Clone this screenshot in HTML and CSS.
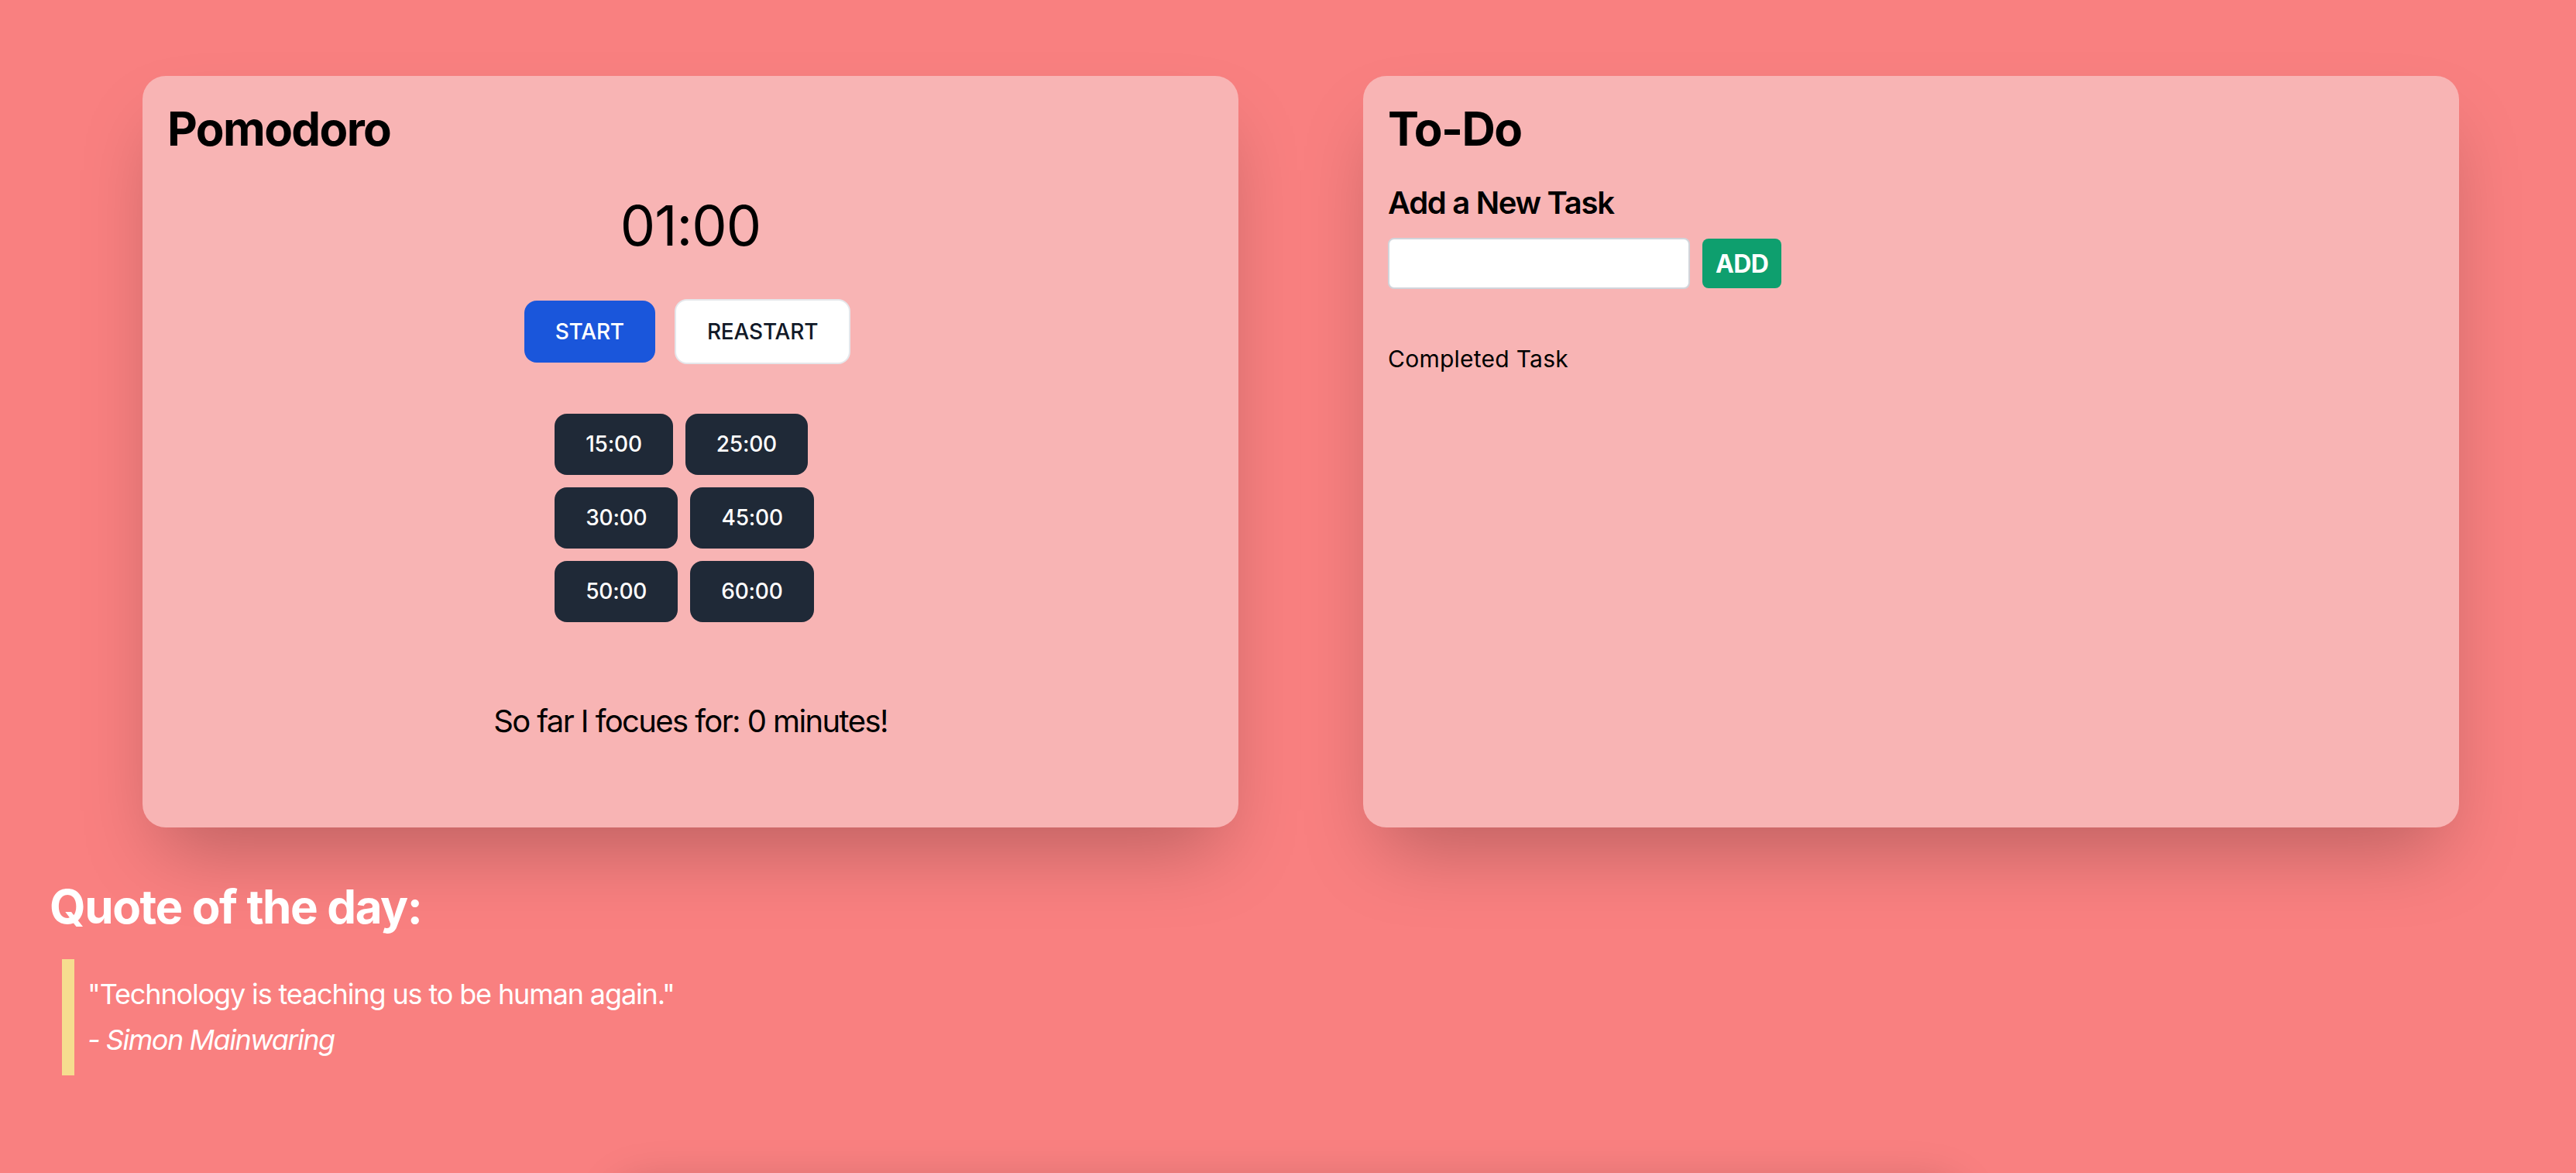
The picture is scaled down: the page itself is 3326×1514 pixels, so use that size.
FILE: index.html
```html
<!DOCTYPE html>
<html lang="en">
<head>
<meta charset="utf-8">
<title>Pomodoro &amp; To-Do</title>
<link rel="stylesheet" href="styles.css">
</head>
<body>
<main class="page">
  <div class="cards">
    <section class="card">
      <h1 class="card-title">Pomodoro</h1>
      <div class="timer">01:00</div>
      <div class="controls">
        <button class="btn btn-primary">START</button>
        <button class="btn btn-light">REASTART</button>
      </div>
      <div class="presets">
        <div class="preset-row">
          <button class="btn btn-dark">15:00</button>
          <button class="btn btn-dark">25:00</button>
        </div>
        <div class="preset-row">
          <button class="btn btn-dark">30:00</button>
          <button class="btn btn-dark">45:00</button>
        </div>
        <div class="preset-row">
          <button class="btn btn-dark">50:00</button>
          <button class="btn btn-dark">60:00</button>
        </div>
      </div>
      <p class="focus">So far I focues for: 0 minutes!</p>
    </section>
    <section class="card">
      <h1 class="card-title">To-Do</h1>
      <h2 class="todo-sub">Add a New Task</h2>
      <div class="add-row">
        <input class="task-input" type="text" aria-label="New task">
        <button class="btn-add">ADD</button>
      </div>
      <p class="completed">Completed Task</p>
    </section>
  </div>
  <section class="quote">
    <h2 class="quote-title">Quote of the day:</h2>
    <blockquote class="quote-body">
      <p class="quote-text">"Technology is teaching us to be human again."</p>
      <p class="quote-author">- Simon Mainwaring</p>
    </blockquote>
  </section>
  <div class="below-card"></div>
</main>
</body>
</html>
```
FILE: styles.css
```css
html, body {
  margin: 0;
  padding: 0;
}

body {
  background: #f98080;
  font-family: Inter, "Noto Sans", "Liberation Sans", sans-serif;
  color: #000;
}

.page {
  box-sizing: border-box;
  height: 1514px;
  overflow: hidden;
  padding-top: 98px;
}

.cards {
  display: grid;
  grid-template-columns: 1fr 1fr;
  gap: 161px;
  padding: 0 151px 0 184px;
}

.card {
  box-sizing: border-box;
  height: 970px;
  padding: 32px;
  background: #f8b4b4;
  border-radius: 30px;
  box-shadow: 0 50px 100px -24px rgba(0, 0, 0, 0.25);
}

.card-title {
  margin: 0;
  font-size: 60px;
  line-height: 72px;
  font-weight: 700;
  letter-spacing: -1.6px;
}

.timer {
  margin-top: 49px;
  font-size: 72px;
  line-height: 80px;
  text-align: center;
  font-weight: 400;
  letter-spacing: -1px;
}

.controls {
  margin-top: 55px;
  display: flex;
  justify-content: center;
  align-items: center;
}

.btn {
  box-sizing: border-box;
  font-family: inherit;
  font-size: 28px;
  font-weight: 500;
  line-height: 40px;
  padding: 20px 40px;
  border-radius: 16px;
  border: none;
  cursor: pointer;
  letter-spacing: -0.2px;
}

.btn-primary {
  background: #1a56db;
  color: #fff;
  margin-right: 25px;
}

.btn-light {
  background: #fff;
  color: #111928;
  border: 2px solid #e5e7eb;
  margin-right: 8px;
}

.presets {
  margin: 64px auto 0;
  width: fit-content;
  display: flex;
  flex-direction: column;
  align-items: flex-start;
}

.preset-row {
  display: flex;
  margin-bottom: 16px;
}

.btn-dark {
  background: #1f2937;
  color: #fff;
  margin-right: 16px;
  height: 79px;
  padding-top: 0;
  padding-bottom: 0;
  line-height: 79px;
}

.focus {
  margin: 84px 0 0;
  font-size: 40px;
  line-height: 56px;
  text-align: center;
  letter-spacing: -1.6px;
}

.todo-sub {
  margin: 32px 0 0;
  font-size: 40px;
  line-height: 56px;
  font-weight: 600;
  letter-spacing: -1.3px;
}

.add-row {
  margin-top: 17px;
  display: flex;
  align-items: center;
  gap: 16px;
}

.task-input {
  box-sizing: border-box;
  width: 390px;
  height: 66px;
  border: 2px solid #d1d5db;
  border-radius: 8px;
  background: #fff;
  padding: 0 16px;
  font-family: inherit;
  font-size: 30px;
}

.btn-add {
  box-sizing: border-box;
  height: 64px;
  padding: 0 17px;
  border: none;
  border-radius: 8px;
  background: #0e9f6e;
  color: #fff;
  font-family: inherit;
  font-size: 32px;
  font-weight: 700;
  letter-spacing: -0.6px;
  cursor: pointer;
}

.completed {
  margin: 66px 0 0;
  font-size: 30px;
  line-height: 48px;
  letter-spacing: 0.25px;
}

.quote {
  margin-top: 66px;
  padding-left: 64px;
  color: #fff;
}

.quote-title {
  margin: 0;
  font-size: 60px;
  line-height: 72px;
  font-weight: 700;
  letter-spacing: -1.4px;
}

.quote-body {
  margin: 32px 0 0 16px;
  border-left: 16px solid #f6dd8f;
  padding: 16px 0 16px 17px;
  font-size: 36px;
  line-height: 59px;
}

.quote-text,
.quote-author {
  margin: 0;
}

.quote-text {
  letter-spacing: -1.13px;
}

.quote-author {
  font-style: italic;
  letter-spacing: -1.45px;
}

.below-card {
  width: 1730px;
  height: 400px;
  margin: 132px auto 0;
  background: #f8b4b4;
  border-radius: 30px;
  box-shadow: 0 10px 60px 0 rgba(0, 0, 0, 0.2);
}
```
